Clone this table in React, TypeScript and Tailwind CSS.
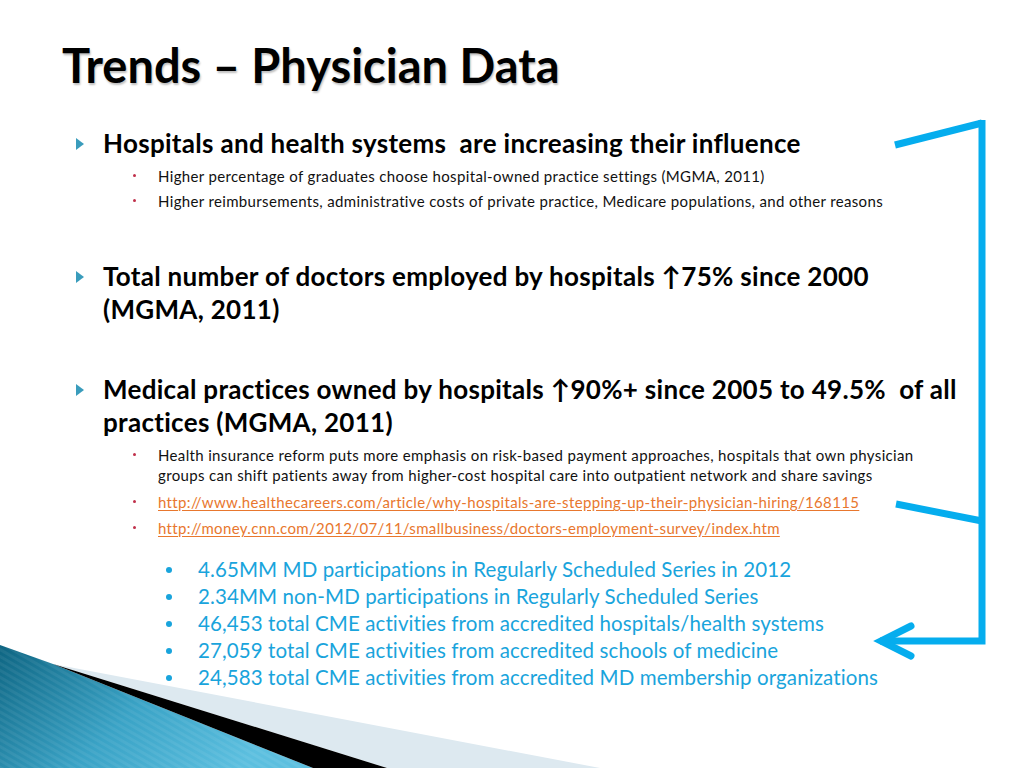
import React from "react";

const Tri = () => (
  <svg width="8" height="12" viewBox="0 0 8 12" className="shrink-0">
    <polygon points="0,0 8,6 0,12" fill="#3a9cbc" />
  </svg>
);

const Main = ({ children, className = "", textClass = "" }: { children: React.ReactNode; className?: string; textClass?: string }) => (
  <div className={"flex " + className}>
    <div className="w-[41px] pl-[14px] pt-[11px] shrink-0">
      <Tri />
    </div>
    <div className={"text-[26px] leading-[33px] tracking-[0.3px] font-bold text-black " + textClass}>{children}</div>
  </div>
);

const Sub = ({ children, className = "", textClass = "" }: { children: React.ReactNode; className?: string; textClass?: string }) => (
  <div className={"flex " + className}>
    <div className="w-[96px] shrink-0 flex justify-end pr-[22px] pt-[8px]">
      <span className="block w-[3px] h-[3px] rounded-full bg-[#c0304a]" />
    </div>
    <div className={"text-[15px] leading-[20px] tracking-[0.35px] text-[#111] " + textClass}>{children}</div>
  </div>
);

const Blue = ({ children }: { children: React.ReactNode }) => (
  <div className="flex h-[27px] items-center">
    <div className="w-[48px] shrink-0 pl-[16px]">
      <span className="block w-[6px] h-[6px] rounded-full bg-[#19a4dc]" />
    </div>
    <div className="text-[20.5px] leading-[27px] tracking-[0.1px] text-[#19a4dc]">{children}</div>
  </div>
);

export default function App() {
  return (
    <div className="relative w-[1024px] h-[768px] bg-white overflow-hidden font-['Lato','Open_Sans',sans-serif]">
      <h1 className="pl-[62px] pt-[38px] h-[127px] text-[47px] leading-[54px] font-bold text-black [text-shadow:1px_2px_2px_rgba(0,0,0,0.25)]">
        Trends – Physician Data
      </h1>
      <div className="pl-[62px]">
        <Main>Hospitals and health systems&nbsp; are increasing their influence</Main>
        <Sub className="mt-[6px]">Higher percentage of graduates choose hospital-owned practice settings (MGMA, 2011)</Sub>
        <Sub className="mt-[5px]">Higher reimbursements, administrative costs of private practice, Medicare populations, and other reasons</Sub>
        <Main className="mt-[49px]">
          Total number of doctors employed by hospitals ↑75% since 2000
          <br />
          (MGMA, 2011)
        </Main>
        <Main className="mt-[47px]" textClass="w-[858px]">
          Medical practices owned by hospitals ↑90%+ since 2005 to 49.5%&nbsp; of all practices (MGMA, 2011)
        </Main>
        <Sub className="mt-[6px]" textClass="w-[780px]">
          Health insurance reform puts more emphasis on risk-based payment approaches, hospitals that own physician groups can shift patients away from higher-cost hospital care into outpatient network and share savings
        </Sub>
        <Sub className="mt-[7px]" textClass="text-[#e8772e] underline underline-offset-2">
          http://www.healthecareers.com/article/why-hospitals-are-stepping-up-their-physician-hiring/168115
        </Sub>
        <Sub className="mt-[6px]" textClass="text-[#e8772e] underline underline-offset-2">
          http://money.cnn.com/2012/07/11/smallbusiness/doctors-employment-survey/index.htm
        </Sub>
        <div className="mt-[18px] pl-[88px]">
          <Blue>4.65MM MD participations in Regularly Scheduled Series in 2012</Blue>
          <Blue>2.34MM non-MD participations in Regularly Scheduled Series</Blue>
          <Blue>46,453 total CME activities from accredited hospitals/health systems</Blue>
          <Blue>27,059 total CME activities from accredited schools of medicine</Blue>
          <Blue>24,583 total CME activities from accredited MD membership organizations</Blue>
        </div>
      </div>

      {/* bracket overlay */}
      <svg className="absolute left-0 top-0 pointer-events-none" width="1024" height="768" viewBox="0 0 1024 768">
        <g stroke="#05adee" strokeWidth="7" fill="none" strokeLinecap="butt" strokeLinejoin="miter">
          <line x1="895" y1="145" x2="982" y2="123" />
          <polyline points="982,120 982,641 880,641" />
          <line x1="896" y1="504" x2="982" y2="521" />
          <polyline points="911,626 881,641 911,656" strokeLinecap="round" />
        </g>
      </svg>

      {/* bottom-left decoration */}
      <svg className="absolute left-0 top-0 pointer-events-none" width="1024" height="768" viewBox="0 0 1024 768">
        <defs>
          <linearGradient id="teal" x1="0" y1="0" x2="1" y2="0.4">
            <stop offset="0" stopColor="#0e6582" />
            <stop offset="0.55" stopColor="#3aa3c6" />
            <stop offset="1" stopColor="#5cbfdf" />
          </linearGradient>
          <pattern id="stripes" width="6" height="6" patternUnits="userSpaceOnUse" patternTransform="rotate(-60)">
            <rect width="3" height="6" fill="rgba(255,255,255,0.06)" />
          </pattern>
        </defs>
        <polygon points="53,664 600,768 387,768" fill="#dde9f0" />
        <polygon points="0,645 53,664 313,768 0,768" fill="url(#teal)" />
        <polygon points="0,645 53,664 313,768 0,768" fill="url(#stripes)" />
        <polygon points="53,664 387,768 313,768" fill="#000" />
      </svg>
    </div>
  );
}
